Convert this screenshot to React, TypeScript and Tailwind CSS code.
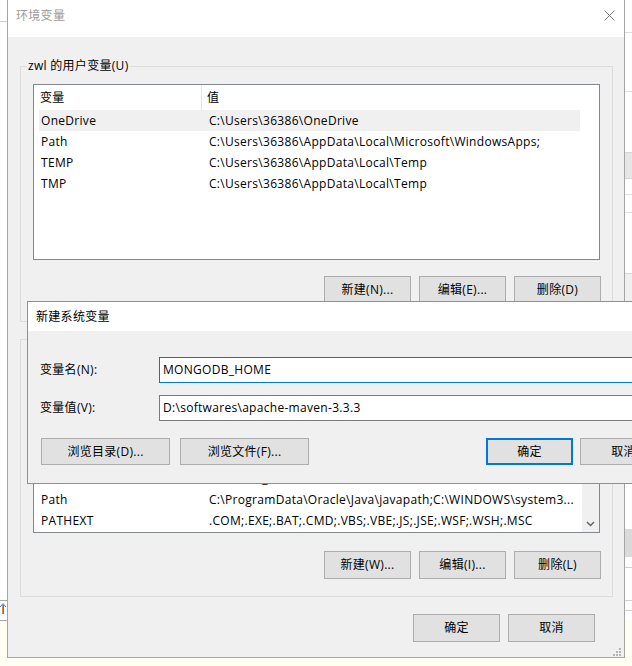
import React from "react";

function Btn({ children, className = "" }: { children: React.ReactNode; className?: string }) {
  return (
    <div
      className={`flex items-center justify-center bg-[#e1e1e1] border border-[#adadad] text-black whitespace-nowrap ${className}`}
    >
      {children}
    </div>
  );
}

type Row = { n: string; v: string; sel?: boolean };

function ListView({ rows, scroll, bottom }: { rows: Row[]; scroll?: boolean; bottom?: boolean }) {
  return (
    <div className="relative w-[567px] h-[176px] border border-[#828790] bg-white flex overflow-hidden">
      <div className="flex-1 flex flex-col pl-[5px] min-w-0">
        <div className="flex h-[25px] shrink-0 w-[541px]">
          <div className="w-[163px] shrink-0 border-r border-[#e5e5e5] flex items-center pl-[1px]">变量</div>
          <div className="flex-1 flex items-center pl-[5px]">值</div>
        </div>
        <div className={`flex-1 flex flex-col overflow-hidden ${bottom ? "justify-end pb-[1px]" : ""}`}>
          {rows.map((r, i) => (
            <div
              key={i}
              className={`flex h-[21px] shrink-0 w-[541px] items-center ${r.sel ? "bg-[#f0f0f0]" : ""}`}
            >
              <div className="w-[163px] shrink-0 pl-[2px] whitespace-nowrap overflow-hidden">{r.n}</div>
              <div className="flex-1 pl-[7px] whitespace-nowrap overflow-hidden">{r.v}</div>
            </div>
          ))}
        </div>
      </div>
      {scroll && (
        <div className="w-[17px] shrink-0 bg-[#f0f0f0] flex flex-col justify-end">
          <div className="h-[17px] flex items-center justify-center">
            <svg width="9" height="6" viewBox="0 0 9 6">
              <path d="M1 1 L4.5 4.5 L8 1" fill="none" stroke="#606060" strokeWidth="1.4" />
            </svg>
          </div>
        </div>
      )}
    </div>
  );
}

const userRows: Row[] = [
  { n: "OneDrive", v: "C:\\Users\\36386\\OneDrive", sel: true },
  { n: "Path", v: "C:\\Users\\36386\\AppData\\Local\\Microsoft\\WindowsApps;" },
  { n: "TEMP", v: "C:\\Users\\36386\\AppData\\Local\\Temp" },
  { n: "TMP", v: "C:\\Users\\36386\\AppData\\Local\\Temp" },
];

const sysRows: Row[] = [
  { n: "ComSpec", v: "C:\\WINDOWS\\system32\\cmd.exe" },
  { n: "JAVA_HOME", v: "C:\\Program Files\\Java\\jdk1.8.0_131" },
  { n: "NUMBER_OF_PROCESSORS", v: "4" },
  { n: "OS", v: "Windows_NT" },
  { n: "Path", v: "C:\\ProgramData\\Oracle\\Java\\javapath;C:\\WINDOWS\\system3..." },
  { n: "PATHEXT", v: ".COM;.EXE;.BAT;.CMD;.VBS;.VBE;.JS;.JSE;.WSF;.WSH;.MSC" },
];

export default function App() {
  return (
    <div className="relative w-[632px] h-[666px] overflow-hidden bg-white text-[12px] tracking-[0.3px] text-black font-['Open_Sans','Noto_Sans_CJK_SC',sans-serif]">
      {/* background desktop bits */}
      <div className="absolute left-0 top-[620px] w-[632px] h-[46px] bg-[#fffef2]" />
      <div className="absolute left-0 top-[21px] w-[7px] h-px bg-[#cfcfcf]" />
      <div className="absolute left-0 top-[600px] w-[7px] h-[21px] border-y border-[#a8a8a8] bg-white">
        <svg width="7" height="19" viewBox="0 0 7 19" className="block">
          <path d="M0 6 L3 2.5 L6 6" fill="none" stroke="#3a7bd5" strokeWidth="1" />
          <path d="M2.5 4 V13" stroke="#e08a3c" strokeWidth="1" />
          <path d="M3.5 4 V13" stroke="#3a7bd5" strokeWidth="1" />
        </svg>
      </div>
      <div className="absolute left-[625px] top-[32px] w-[7px] h-px bg-[#dedede]" />
      <div className="absolute left-[625px] top-[91px] w-[7px] h-px bg-[#dedede]" />
      <div className="absolute left-[625px] top-[152px] w-[7px] h-[27px] bg-[#e6e6e6] border-y border-[#d6d6d6]" />
      <div className="absolute left-[625px] top-[194px] w-[7px] h-px bg-[#e0e0e0]" />
      <div className="absolute left-[625px] top-[212px] w-[7px] h-px bg-[#e0e0e0]" />
      <div className="absolute left-[625px] top-[273px] w-[7px] h-[28px] bg-[#f0f0f0] border-t border-[#d6d6d6]" />
      <div className="absolute left-[625px] top-[529px] w-[7px] h-[28px] bg-[#dadada]" />
      <div className="absolute left-[625px] top-[567px] w-[7px] h-px bg-[#d0d0d0]" />
      <div className="absolute left-[625px] top-[600px] w-[7px] h-px bg-[#d0d0d0]" />
      <div className="absolute left-[625px] top-[610px] w-[7px] h-px bg-[#d0d0d0]" />

      {/* main dialog: 环境变量 */}
      <div className="absolute left-[7px] top-[-1px] w-[618px] h-[659px] border border-[#a5a5a5] bg-[#f0f0f0] flex flex-col">
        <div className="h-[37px] shrink-0 bg-white flex items-start justify-between pl-[8px] pr-[9px]">
          <div className="h-[31px] flex items-center text-[#9a9a9a]">环境变量</div>
          <div className="h-[31px] flex items-center">
            <svg width="11" height="11" viewBox="0 0 11 11">
              <path d="M0.5 0.5 L10.5 10.5 M10.5 0.5 L0.5 10.5" stroke="#7a7a7a" strokeWidth="1" />
            </svg>
          </div>
        </div>
        <div className="flex-1 flex flex-col pl-[12px] pr-[11px] pt-[29px]">
          <div className="relative border border-[#dcdcdc] pt-[17px] pl-[12px] pr-[11px] pb-[17px]">
            <span className="absolute left-[6px] top-[-9px] px-[1px] bg-[#f0f0f0] leading-[16px]">zwl 的用户变量(U)</span>
            <ListView rows={userRows} />
            <div className="flex justify-end gap-[8px] mt-[16px]">
              <Btn className="w-[87px] h-[28px]">新建(N)...</Btn>
              <Btn className="w-[87px] h-[28px]">编辑(E)...</Btn>
              <Btn className="w-[87px] h-[28px]">删除(D)</Btn>
            </div>
          </div>
          <div className="relative mt-[17px] border border-[#dcdcdc] pt-[17px] pl-[12px] pr-[11px] pb-[17px]">
            <span className="absolute left-[6px] top-[-9px] px-[1px] bg-[#f0f0f0] leading-[16px]">系统变量(S)</span>
            <ListView rows={sysRows} scroll bottom />
            <div className="flex justify-end gap-[8px] mt-[18px]">
              <Btn className="w-[87px] h-[28px]">新建(W)...</Btn>
              <Btn className="w-[87px] h-[28px]">编辑(I)...</Btn>
              <Btn className="w-[87px] h-[28px]">删除(L)</Btn>
            </div>
          </div>
          <div className="flex justify-end gap-[8px] mt-[17px] pr-[18px]">
            <Btn className="w-[87px] h-[28px]">确定</Btn>
            <Btn className="w-[87px] h-[28px]">取消</Btn>
          </div>
        </div>
      </div>

      {/* resize grip */}
      <svg className="absolute left-[612px] top-[647px]" width="10" height="10" viewBox="0 0 10 10">
        <rect x="7" y="1" width="2" height="2" fill="#b5b5b5" />
        <rect x="4" y="4" width="2" height="2" fill="#b5b5b5" />
        <rect x="7" y="4" width="2" height="2" fill="#b5b5b5" />
        <rect x="1" y="7" width="2" height="2" fill="#b5b5b5" />
        <rect x="4" y="7" width="2" height="2" fill="#b5b5b5" />
        <rect x="7" y="7" width="2" height="2" fill="#b5b5b5" />
      </svg>

      {/* overlay dialog: 新建系统变量 */}
      <div className="absolute left-[27px] top-[301px] w-[700px] h-[183px] border border-[#4aa3e8] bg-[#f0f0f0] flex flex-col">
        <div className="h-[29px] shrink-0 bg-white flex items-center pl-[8px]">新建系统变量</div>
        <div className="flex-1 flex flex-col pt-[26px] pl-[12px]">
          <div className="flex items-center h-[26px]">
            <div className="w-[119px] shrink-0">变量名(N):</div>
            <div className="w-[540px] h-[26px] bg-white border border-[#0078d7] flex items-center px-[3px] whitespace-nowrap">
              MONGODB_HOME
            </div>
          </div>
          <div className="flex items-center h-[26px] mt-[12px]">
            <div className="w-[119px] shrink-0">变量值(V):</div>
            <div className="w-[540px] h-[26px] bg-white border border-[#7a7a7a] flex items-center px-[3px] whitespace-nowrap">
              D:\softwares\apache-maven-3.3.3
            </div>
          </div>
          <div className="flex items-center mt-[17px] pl-[1px]">
            <Btn className="w-[129px] h-[27px]">浏览目录(D)...</Btn>
            <Btn className="w-[129px] h-[27px] ml-[10px]">浏览文件(F)...</Btn>
            <div className="w-[87px] h-[27px] ml-[177px] flex items-center justify-center bg-[#e1e1e1] border-2 border-[#0078d7]">
              确定
            </div>
            <Btn className="w-[87px] h-[27px] ml-[7px]">取消</Btn>
          </div>
        </div>
      </div>
    </div>
  );
}
